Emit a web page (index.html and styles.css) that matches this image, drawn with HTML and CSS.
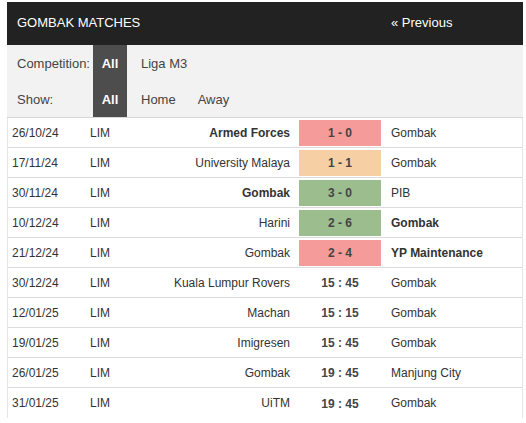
FILE: index.html
```html
<!DOCTYPE html>
<html>
<head>
<meta charset="utf-8">
<link rel="stylesheet" href="styles.css">
</head>
<body>
<div class="widget">
  <div class="head">
    <span class="title">GOMBAK MATCHES</span>
    <span class="prev">« Previous</span>
  </div>
  <div class="filters">
    <div class="frow">
      <span class="flabel">Competition:</span>
      <span class="opt active">All</span>
      <span class="opt">Liga M3</span>
    </div>
    <div class="frow">
      <span class="flabel">Show:</span>
      <span class="opt active">All</span>
      <span class="opt">Home</span>
      <span class="opt">Away</span>
    </div>
  </div>
  <div class="table">
    <div class="row"><span class="date">26/10/24</span><span class="comp">LIM</span><span class="home b">Armed Forces</span><span class="score lose">1 - 0</span><span class="away">Gombak</span></div>
    <div class="row"><span class="date">17/11/24</span><span class="comp">LIM</span><span class="home">University Malaya</span><span class="score draw">1 - 1</span><span class="away">Gombak</span></div>
    <div class="row"><span class="date">30/11/24</span><span class="comp">LIM</span><span class="home b">Gombak</span><span class="score win">3 - 0</span><span class="away">PIB</span></div>
    <div class="row"><span class="date">10/12/24</span><span class="comp">LIM</span><span class="home">Harini</span><span class="score win">2 - 6</span><span class="away b">Gombak</span></div>
    <div class="row"><span class="date">21/12/24</span><span class="comp">LIM</span><span class="home">Gombak</span><span class="score lose">2 - 4</span><span class="away b">YP Maintenance</span></div>
    <div class="row"><span class="date">30/12/24</span><span class="comp">LIM</span><span class="home">Kuala Lumpur Rovers</span><span class="score">15 : 45</span><span class="away">Gombak</span></div>
    <div class="row"><span class="date">12/01/25</span><span class="comp">LIM</span><span class="home">Machan</span><span class="score">15 : 15</span><span class="away">Gombak</span></div>
    <div class="row"><span class="date">19/01/25</span><span class="comp">LIM</span><span class="home">Imigresen</span><span class="score">15 : 45</span><span class="away">Gombak</span></div>
    <div class="row"><span class="date">26/01/25</span><span class="comp">LIM</span><span class="home">Gombak</span><span class="score">19 : 45</span><span class="away">Manjung City</span></div>
    <div class="row"><span class="date">31/01/25</span><span class="comp">LIM</span><span class="home">UiTM</span><span class="score">19 : 45</span><span class="away">Gombak</span></div>
  </div>
</div>
</body>
</html>
```
FILE: styles.css
```css
* { box-sizing: border-box; }
body {
  margin: 0;
  background: #fff;
  font-family: "Liberation Sans", Arial, sans-serif;
  font-size: 12px;
  color: #333;
}
.widget {
  margin: 2px 0 0 7px;
  width: 516px;
}
.head {
  height: 43px;
  background: #222;
  color: #fff;
  font-size: 13px;
  display: flex;
  align-items: center;
  justify-content: space-between;
  padding: 0 0 2px 10px;
}
.prev {
  width: 132px;
}
.filters {
  background: #f2f2f2;
  border-bottom: 1px solid #d8d8d8;
}
.frow {
  height: 36px;
  display: flex;
  align-items: stretch;
  font-size: 13px;
  color: #444;
}
.flabel {
  width: 86px;
  padding-left: 10px;
  display: flex;
  align-items: center;
}
.opt {
  display: flex;
  align-items: center;
  padding: 0 8px;
  margin-left: 6px;
}
.opt.active {
  margin-left: 0;
  width: 34px;
  justify-content: center;
  padding: 0;
  background: #4d4d4d;
  color: #fff;
  font-weight: bold;
}
.table {
  border-left: 1px solid #e6e6e6;
  border-right: 1px solid #e6e6e6;
}
.row {
  display: grid;
  grid-template-columns: 82px 40px 169px 82px 1fr;
  height: 30px;
  border-bottom: 1px solid #dcdcdc;
  align-items: center;
}
.row:last-child { border-bottom: none; }
.date { padding-left: 4px; }
.home { text-align: right; padding-right: 9px; white-space: nowrap; }
.away { padding-left: 10px; white-space: nowrap; }
.b { font-weight: bold; }
.score {
  height: 26px;
  margin-top: 1px;
  display: flex;
  align-items: center;
  justify-content: center;
  font-weight: bold;
  color: #444;
}
.lose { background: #f59b99; }
.draw { background: #f6cfa5; }
.win { background: #9cbd8e; }
```
